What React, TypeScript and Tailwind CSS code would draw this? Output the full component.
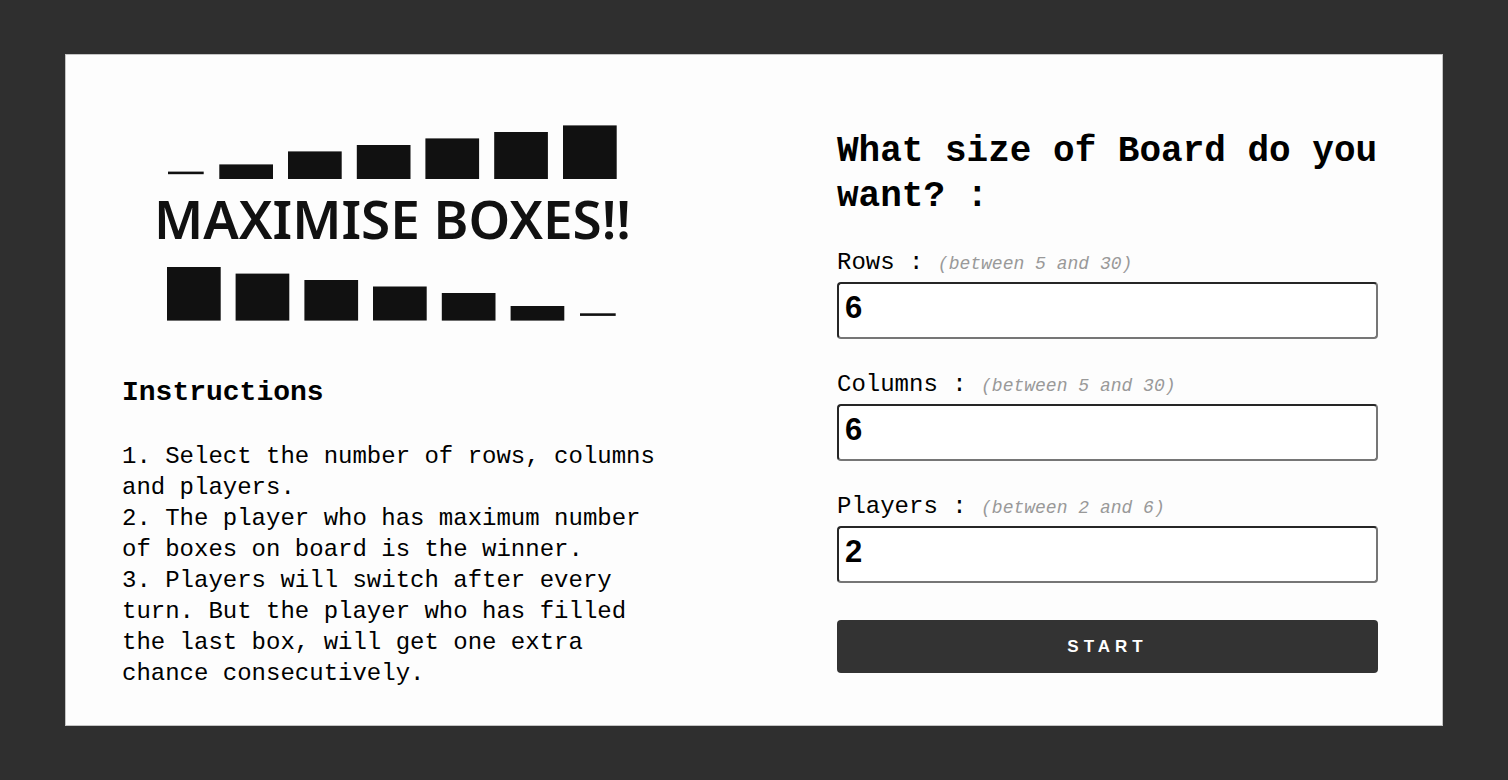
import { useState } from "react";

type Bar = { x: number; y: number; width: number; height: number };

const RISING: Bar[] = [
  { x: 1, y: 46.6, width: 35.7, height: 2.6 },
  { x: 52.3, y: 39.4, width: 53.7, height: 14.6 },
  { x: 121, y: 26.4, width: 53.7, height: 27.6 },
  { x: 189.8, y: 20, width: 53.7, height: 34 },
  { x: 258.4, y: 13.4, width: 53.7, height: 40.6 },
  { x: 327.2, y: 7, width: 53.7, height: 47 },
  { x: 396, y: 0.4, width: 53.7, height: 53.6 },
];

const FALLING: Bar[] = [
  { x: 0, y: 0, width: 53.7, height: 53.6 },
  { x: 68.6, y: 6.6, width: 53.7, height: 47 },
  { x: 137.4, y: 13, width: 53.7, height: 40.6 },
  { x: 206, y: 19.5, width: 53.7, height: 34 },
  { x: 274.8, y: 26, width: 53.7, height: 27.6 },
  { x: 343.6, y: 39, width: 53.7, height: 14.6 },
  { x: 413, y: 46.3, width: 35.7, height: 2.6 },
];

function Bars({ bars }: { bars: Bar[] }) {
  return (
    <svg
      className="block h-[54px] w-[452px] max-w-full"
      viewBox="0 0 452 54"
      fill="#111111"
      aria-hidden="true"
    >
      {bars.map((bar) => (
        <rect key={bar.x} {...bar} />
      ))}
    </svg>
  );
}

type FieldProps = {
  id: string;
  label: string;
  min: number;
  max: number;
  initial: number;
};

function Field({ id, label, min, max, initial }: FieldProps) {
  const [value, setValue] = useState(String(initial));
  return (
    <div className="flex flex-col gap-1">
      <label htmlFor={id} className="text-2xl leading-[31px]">
        {label} :{" "}
        <i className="text-lg leading-none text-[#999999]">
          (between {min} and {max})
        </i>
      </label>
      <input
        id={id}
        type="number"
        min={min}
        max={max}
        value={value}
        onChange={(event) => setValue(event.target.value)}
        className="h-[57px] w-full rounded-sm border-2 border-t-[#262626] border-r-[#767676] border-b-[#767676] border-l-[#262626] bg-white px-1.5 pb-1.5 font-['Liberation_Sans',Arial,sans-serif] text-[31px] font-bold"
      />
    </div>
  );
}

export default function App() {
  return (
    <div className="flex min-h-screen flex-col justify-center bg-[#2f2f2f] px-[65px] py-[54px] font-['Liberation_Mono',monospace] text-black">
      <main className="grid grid-cols-2 gap-[174px] border border-[#c4c4c4] bg-[#fdfdfd] pt-[70px] pr-16 pb-9 pl-14">
        <section>
          <div className="flex flex-col items-center text-[#111111]">
            <Bars bars={RISING} />
            <h1 className="pt-1 pb-3 font-['Noto_Sans',sans-serif] text-[53px] leading-[72px] font-semibold whitespace-nowrap">
              MAXIMISE BOXES!!
            </h1>
            <Bars bars={FALLING} />
          </div>
          <h2 className="mt-14 text-[28px] leading-8 font-bold">
            Instructions
          </h2>
          <div className="mt-8 text-2xl leading-[31px]">
            <p>1. Select the number of rows, columns and players.</p>
            <p>2. The player who has maximum number of boxes on board is the winner.</p>
            <p>
              3. Players will switch after every turn. But the player who has
              filled the last box, will get one extra chance consecutively.
            </p>
          </div>
        </section>
        <form className="pt-1" onSubmit={(event) => event.preventDefault()}>
          <h2 className="text-4xl leading-[45px] font-bold">
            What size of Board do you want? :
          </h2>
          <div className="mt-7 flex flex-col gap-[30px]">
            <Field id="rows" label="Rows" min={5} max={30} initial={6} />
            <Field id="columns" label="Columns" min={5} max={30} initial={6} />
            <Field id="players" label="Players" min={2} max={6} initial={2} />
          </div>
          <button
            type="submit"
            className="mt-[37px] h-[53px] w-full rounded-sm bg-[#333333] font-['Liberation_Sans',Arial,sans-serif] text-[17px] font-bold tracking-[5px] text-white"
          >
            START
          </button>
        </form>
      </main>
    </div>
  );
}
